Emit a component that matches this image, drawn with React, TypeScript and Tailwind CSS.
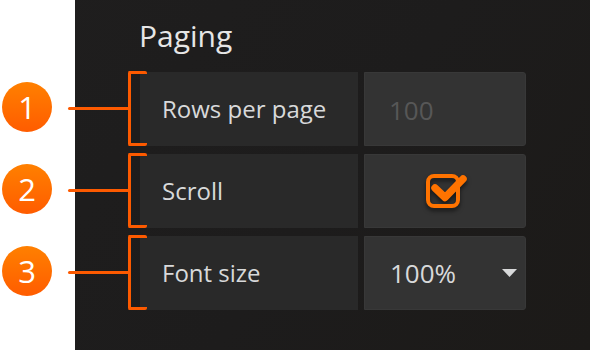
import React from 'react';

const rows = [
  { n: '1', label: 'Rows per page', kind: 'input' },
  { n: '2', label: 'Scroll', kind: 'check' },
  { n: '3', label: 'Font size', kind: 'select' },
];

const Callout = ({ n }: { n: string }) => (
  <div className="flex w-[140px] shrink-0 items-stretch">
    <div className="ml-[2px] flex items-center pb-[4px]">
      <div className="flex h-[50px] w-[50px] items-center justify-center rounded-full bg-[linear-gradient(180deg,#ff8000,#ff5c00)] text-[31px] leading-none text-white">
        {n}
      </div>
    </div>
    <div className="ml-[16px] flex items-center pb-[2px]">
      <div className="h-[3px] w-[60px] rounded-l-full bg-[#fd5a00]" />
    </div>
    <div className="relative z-10 -mr-[7px] -mt-[1px] w-[19px] rounded-[2px] border-y-[3px] border-l-[3px] border-[#fd5a00]" />
  </div>
);

const CheckIcon = () => (
  <svg width="46" height="42" viewBox="0 0 46 42" className="drop-shadow-[0_3px_2px_rgba(0,0,0,0.55)]">
    <rect x="4" y="5" width="30" height="30" rx="6" fill="none" stroke="#ff7300" strokeWidth="4" />
    <path d="M11 17 L21 26.5 L39 8" fill="none" stroke="#ff7300" strokeWidth="7.5" strokeLinecap="round" strokeLinejoin="round" />
  </svg>
);

export default function App() {
  return (
    <div className="h-[350px] w-[590px] overflow-hidden bg-[linear-gradient(to_right,#ffffff_75px,transparent_75px),linear-gradient(125deg,#1f1e1e_0%,#1d1c1c_55%,#1c1a18_100%)] font-['Open_Sans',sans-serif]">
      <h2 className="pl-[139px] pt-[21px] text-[30px] leading-[30px] text-[#e6e6e6]">Paging</h2>
      <div className="mt-[21px] flex flex-col gap-[8px]">
        {rows.map((row) => (
          <div key={row.n} className="flex h-[74px] items-stretch">
            <Callout n={row.n} />
            <div className="flex w-[218px] items-center bg-[#292929] pl-[22px] text-[24px] text-[#d8d9da]">
              {row.label}
            </div>
            <div className="ml-[6px] flex w-[162px] items-center rounded-r-[3px] border border-[#383838] bg-[#333333]">
              {row.kind === 'input' && (
                <span className="pl-[24px] pt-[2px] text-[26px] text-[#575757]">100</span>
              )}
              {row.kind === 'check' && (
                <div className="flex w-full justify-center pl-[4px] pt-[2px]">
                  <CheckIcon />
                </div>
              )}
              {row.kind === 'select' && (
                <div className="flex w-full items-center justify-between pl-[25px] pr-[8px]">
                  <span className="text-[26px] text-[#d8d9da]">100%</span>
                  <svg width="15" height="8" viewBox="0 0 15 8">
                    <path d="M0 0 H15 L7.5 8 Z" fill="#d8d9da" />
                  </svg>
                </div>
              )}
            </div>
          </div>
        ))}
      </div>
    </div>
  );
}
